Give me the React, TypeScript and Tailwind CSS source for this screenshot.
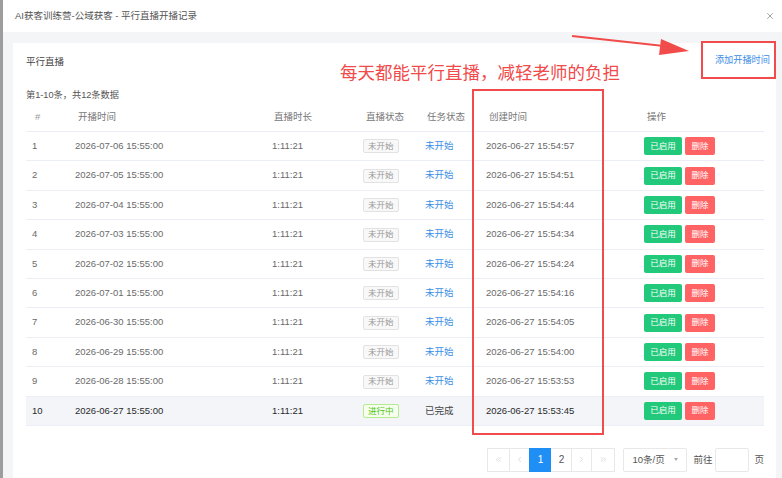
import { ChevronLeft, ChevronRight, ChevronsLeft, ChevronsRight, X } from 'lucide-react'

const rows = [
  { id: 1, start: '2026-07-06 15:55:00', created: '2026-06-27 15:54:57' },
  { id: 2, start: '2026-07-05 15:55:00', created: '2026-06-27 15:54:51' },
  { id: 3, start: '2026-07-04 15:55:00', created: '2026-06-27 15:54:44' },
  { id: 4, start: '2026-07-03 15:55:00', created: '2026-06-27 15:54:34' },
  { id: 5, start: '2026-07-02 15:55:00', created: '2026-06-27 15:54:24' },
  { id: 6, start: '2026-07-01 15:55:00', created: '2026-06-27 15:54:16' },
  { id: 7, start: '2026-06-30 15:55:00', created: '2026-06-27 15:54:05' },
  { id: 8, start: '2026-06-29 15:55:00', created: '2026-06-27 15:54:00' },
  { id: 9, start: '2026-06-28 15:55:00', created: '2026-06-27 15:53:53' },
  { id: 10, start: '2026-06-27 15:55:00', created: '2026-06-27 15:53:45', live: true },
]

const cols = 'grid grid-cols-[43px_197px_91px_62px_61px_158px_126px]'

export default function App() {
  return (
    <div className="w-[782px] h-[478px] flex bg-white overflow-hidden relative font-['Liberation_Sans','Noto_Sans_CJK_SC',sans-serif]">
      <div className="w-[3px] bg-[#9d9d9d]" />
      <div className="flex-1 flex flex-col">
        <div className="h-[32px] flex items-center justify-between pl-[12px] pr-[7px]">
          <span className="text-[9.5px] text-[#555]">AI获客训练营-公域获客 - 平行直播开播记录</span>
          <X size={10} strokeWidth={1.6} className="text-[#777]" />
        </div>
        <div className="flex-1 bg-[#f4f5f7] pl-[10px] pr-[6px] pt-[11px]">
          <div className="bg-white h-full pl-[13px] pr-[12px] pt-[12px]">
            <div className="h-[14px] flex items-center justify-between">
              <span className="text-[9.5px] text-[#444]">平行直播</span>
              <span className="text-[9.2px] text-[#3a8ee6] mr-[-6px] mt-[-3px]">添加开播时间</span>
            </div>
            <div className="mt-[20px] h-[14px] flex items-center text-[9.2px] text-[#555]">第1-10条，共12条数据</div>

            <div className="mt-[1px] w-[738px]">
              <div className={`${cols} h-[28px] items-center text-[9.5px] text-[#777] border-b border-[#ebeef5]`}>
                <span className="pl-[9px] text-[#999]">#</span>
                <span className="pl-[9px]">开播时间</span>
                <span className="pl-[8px]">直播时长</span>
                <span className="pl-[9px]">直播状态</span>
                <span className="pl-[8px]">任务状态</span>
                <span className="pl-[9px]">创建时间</span>
                <span className="pl-[9px]">操作</span>
              </div>
              {rows.map((r) => (
                <div
                  key={r.id}
                  className={`${cols} h-[29.4px] items-center text-[9.5px] border-b border-[#ebeef5] ${
                    r.live ? 'bg-[#f3f5f9] text-[#2a2a2a]' : 'text-[#6a6a6a]'
                  }`}
                >
                  <span className="pl-[6px]">{r.id}</span>
                  <span className="pl-[6px]">{r.start}</span>
                  <span className="pl-[6px]">1:11:21</span>
                  <span className="pl-[6px]">
                    {r.live ? (
                      <span className="inline-flex items-center h-[14px] px-[4px] rounded-[2px] border border-[#b7eb8f] bg-[#f6ffed] text-[#52c41a] text-[8.5px]">
                        进行中
                      </span>
                    ) : (
                      <span className="inline-flex items-center h-[14px] px-[4px] rounded-[2px] border border-[#e2e2e2] bg-[#f8f8f8] text-[#999] text-[8.5px]">
                        未开始
                      </span>
                    )}
                  </span>
                  <span className={`pl-[6px] ${r.live ? 'text-[#444]' : 'text-[#3a8ee6]'}`}>
                    {r.live ? '已完成' : '未开始'}
                  </span>
                  <span className="pl-[6px]">{r.created}</span>
                  <span className="pl-[6px] flex gap-[3px]">
                    <span className="w-[38px] h-[18px] rounded-[2px] bg-[#22c97a] text-white text-[8.5px] flex items-center justify-center">
                      已启用
                    </span>
                    <span className="w-[30px] h-[18px] rounded-[2px] bg-[#ff6363] text-white text-[8.5px] flex items-center justify-center">
                      删除
                    </span>
                  </span>
                </div>
              ))}
            </div>

            <div className="mt-[22px] flex items-center justify-end text-[9.5px] text-[#666]">
              <div className="flex">
                <div className="w-[23px] h-[24px] flex items-center justify-center border border-[#e8e8e8]"><ChevronsLeft size={9} strokeWidth={1.4} className="text-[#bbb]" /></div>
                <div className="w-[21px] h-[24px] flex items-center justify-center border border-[#e8e8e8] -ml-px"><ChevronLeft size={9} strokeWidth={1.4} className="text-[#bbb]" /></div>
                <div className="w-[22px] h-[24px] flex items-center justify-center bg-[#1f8ef5] text-white text-[10px] -ml-px relative">1</div>
                <div className="w-[22px] h-[24px] flex items-center justify-center border border-[#e8e8e8] -ml-px text-[10px] text-[#555]">2</div>
                <div className="w-[21px] h-[24px] flex items-center justify-center border border-[#e8e8e8] -ml-px"><ChevronRight size={9} strokeWidth={1.4} className="text-[#bbb]" /></div>
                <div className="w-[24px] h-[24px] flex items-center justify-center border border-[#e8e8e8] -ml-px"><ChevronsRight size={9} strokeWidth={1.4} className="text-[#bbb]" /></div>
              </div>
              <div className="ml-[8px] w-[64px] h-[24px] border border-[#e8e8e8] rounded-[2px] flex items-center justify-between pl-[8px] pr-[8px]">
                <span className="text-[#555]">10条/页</span>
                <span className="w-0 h-0 border-l-[2.5px] border-r-[2.5px] border-t-[3px] border-l-transparent border-r-transparent border-t-[#aaa]" />
              </div>
              <span className="ml-[6px] text-[#555]">前往</span>
              <div className="ml-[3px] w-[34px] h-[24px] border border-[#e8e8e8] rounded-[2px]" />
              <span className="ml-[5px] text-[#555]">页</span>
            </div>
          </div>
        </div>
      </div>

      {/* annotation overlay */}
      <div className="absolute left-[340px] top-[61px] text-[17.5px] leading-[22px] text-[#f14a4a] font-['Noto_Sans_CJK_SC',sans-serif]">
        每天都能平行直播，减轻老师的负担
      </div>
      <div className="absolute left-[701px] top-[41px] w-[75px] h-[38px] border-2 border-[#f24b4b]" />
      <div className="absolute left-[472px] top-[89px] w-[132px] h-[346px] border-2 border-[#f24b4b]" />
      <svg className="absolute left-0 top-0" width="782" height="478" viewBox="0 0 782 478">
        <line x1="572" y1="36" x2="664" y2="46" stroke="#f24b4b" strokeWidth="2" />
        <polygon points="689,51 661,39 659,55" fill="#f24b4b" />
      </svg>
    </div>
  )
}
